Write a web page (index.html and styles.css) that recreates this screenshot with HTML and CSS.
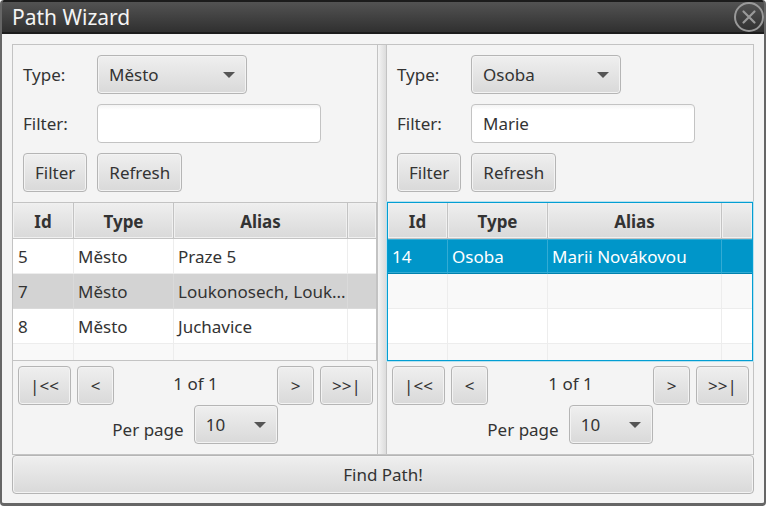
FILE: index.html
```
<!DOCTYPE html>
<html lang="en">
<head>
<meta charset="utf-8">
<title>Path Wizard</title>
<link rel="stylesheet" href="styles.css">
</head>
<body>
<div class="window">
  <header class="titlebar">
    <h1 class="title">Path Wizard</h1>
    <button class="close" type="button" aria-label="Close">
      <svg viewBox="0 0 30 30" width="30" height="30" fill="none" stroke="#999">
        <circle cx="15" cy="15" r="14" stroke-width="2"/>
        <path d="M9.500 9.500L20.500 20.500M20.500 9.500L9.500 20.500" stroke-width="2.200" stroke-linecap="round"/>
      </svg>
    </button>
  </header>
  <main class="content">
    <div class="split">
      <section class="pane pane-from">
        <form class="form">
          <label for="type-a">Type:</label>
          <span class="combo combo-type"><select id="type-a"><option>Město</option></select></span>
          <label for="filter-a">Filter:</label>
          <input class="field" id="filter-a" type="text">
          <div class="actions">
            <button class="btn" type="button">Filter</button>
            <button class="btn" type="button">Refresh</button>
          </div>
        </form>
        <div class="table-view">
          <table>
            <colgroup><col class="c-id"><col class="c-type"><col class="c-alias"><col></colgroup>
            <thead><tr><th>Id</th><th>Type</th><th>Alias</th><th></th></tr></thead>
            <tbody>
              <tr><td>5</td><td>Město</td><td>Praze 5</td><td></td></tr>
              <tr class="inactive"><td>7</td><td>Město</td><td>Loukonosech, Louk...</td><td></td></tr>
              <tr><td>8</td><td>Město</td><td>Juchavice</td><td></td></tr>
              <tr class="odd"><td></td><td></td><td></td><td></td></tr>
            </tbody>
          </table>
        </div>
        <nav class="pager">
          <button class="btn end" type="button">|&lt;&lt;</button>
          <button class="btn step" type="button">&lt;</button>
          <span class="count">1 of 1</span>
          <button class="btn step" type="button">&gt;</button>
          <button class="btn end" type="button">&gt;&gt;|</button>
        </nav>
        <div class="per-page">
          <label for="size-a">Per page</label>
          <span class="combo combo-size"><select id="size-a"><option>10</option></select></span>
        </div>
      </section>
      <div class="divider"></div>
      <section class="pane pane-to">
        <form class="form">
          <label for="type-b">Type:</label>
          <span class="combo combo-type"><select id="type-b"><option>Osoba</option></select></span>
          <label for="filter-b">Filter:</label>
          <input class="field" id="filter-b" type="text" value="Marie">
          <div class="actions">
            <button class="btn" type="button">Filter</button>
            <button class="btn" type="button">Refresh</button>
          </div>
        </form>
        <div class="table-view focused">
          <table>
            <colgroup><col class="c-id"><col class="c-type"><col class="c-alias"><col></colgroup>
            <thead><tr><th>Id</th><th>Type</th><th>Alias</th><th></th></tr></thead>
            <tbody>
              <tr class="selected"><td>14</td><td>Osoba</td><td>Marii Novákovou</td><td></td></tr>
              <tr class="odd"><td></td><td></td><td></td><td></td></tr>
              <tr><td></td><td></td><td></td><td></td></tr>
              <tr class="odd"><td></td><td></td><td></td><td></td></tr>
            </tbody>
          </table>
        </div>
        <nav class="pager">
          <button class="btn end" type="button">|&lt;&lt;</button>
          <button class="btn step" type="button">&lt;</button>
          <span class="count">1 of 1</span>
          <button class="btn step" type="button">&gt;</button>
          <button class="btn end" type="button">&gt;&gt;|</button>
        </nav>
        <div class="per-page">
          <label for="size-b">Per page</label>
          <span class="combo combo-size"><select id="size-b"><option>10</option></select></span>
        </div>
      </section>
    </div>
    <button class="btn find" type="button">Find Path!</button>
  </main>
</div>
</body>
</html>
```
FILE: styles.css
```
* {
  box-sizing: border-box;
}

body {
  margin: 0;
  background: #fff;
  color: #333;
  font: 17px/24px "Noto Sans", "Open Sans", sans-serif;
}

button,
input,
select {
  margin: 0;
  color: inherit;
  font: inherit;
}

.window {
  display: flex;
  flex-direction: column;
  height: 100vh;
  border: 2px solid #666;
  border-width: 0 2px 3px;
  border-radius: 4px;
  background: #f4f4f4;
  overflow: hidden;
}

.titlebar {
  display: flex;
  align-items: center;
  justify-content: space-between;
  height: 34px;
  margin: 0 -2px;
  padding: 0 1px 0 11px;
  border: 1px solid #1c1c1c;
  border-width: 2px 1px;
  border-radius: 4px 4px 0 0;
  background: linear-gradient(#535353, #303030);
}

.title {
  margin: 0;
  color: #f4f4f4;
  font-size: 21px;
  font-weight: 400;
  line-height: 30px;
}

.close {
  display: flex;
  padding: 0;
  border: 0;
  background: none;
}

.content {
  display: flex;
  flex: 1;
  flex-direction: column;
  min-height: 0;
  padding: 10px 10px 9px;
}

.split {
  display: flex;
  flex: 1;
  min-height: 0;
  border: 1px solid #c3c3c3;
}

.pane {
  display: flex;
  flex-direction: column;
  min-width: 0;
}

.pane-from {
  flex: 182;
}

.pane-to {
  flex: 183;
}

.divider {
  width: 10px;
  border: 1px solid #c3c3c3;
  border-width: 0 1px;
  background: linear-gradient(to right, #f4f4f4, #dcdcdc);
}

.form {
  display: grid;
  grid-template-columns: 64px 1fr;
  gap: 10px;
  align-items: center;
  justify-items: start;
  padding: 10px;
}

.actions {
  display: flex;
  grid-column: 1 / -1;
  gap: 10px;
}

.btn,
.combo select {
  height: 39px;
  border: 1px solid #b5b5b5;
  border-radius: 4px;
  background: linear-gradient(#efefef, #d9d9d9);
  box-shadow: inset 0 0 0 1px #f3f3f3;
}

.btn {
  padding: 0 11px;
}

.combo {
  position: relative;
  display: flex;
}

.combo select {
  width: 100%;
  padding: 0 30px 0 11px;
  appearance: none;
}

.combo::after {
  content: "";
  position: absolute;
  top: 17px;
  right: 12px;
  border: 6px solid transparent;
  border-top-color: #555;
  border-bottom: 0;
  pointer-events: none;
}

.combo-type {
  width: 150px;
}

.combo-size {
  width: 84px;
}

.field {
  width: 224px;
  height: 39px;
  padding: 0 11px;
  border: 1px solid #c3c3c3;
  border-radius: 4px;
  background: linear-gradient(#f4f4f4, #fff 5px);
}

.table-view {
  flex: 1;
  min-height: 0;
  border: 1px solid #c3c3c3;
  border-left-width: 0;
  background: #fff;
  overflow: hidden;
}

.focused {
  border-color: #039ed3;
  border-left-width: 1px;
  box-shadow: 0 0 0 1px #b9e1ee;
}

table {
  width: 100%;
  border-collapse: separate;
  border-spacing: 0;
  table-layout: fixed;
}

.c-id {
  width: 60px;
}

.c-type {
  width: 100px;
}

.c-alias {
  width: 174px;
}

.table-view:not(.focused) .c-id {
  width: 61px;
}

th {
  height: 36px;
  padding: 2px 0 0;
  border: 1px solid #c3c3c3;
  border-width: 0 1px 1px 0;
  background: linear-gradient(#efefef, #d9d9d9);
  box-shadow: inset 0 0 0 1px #f0f0f0;
}

td {
  height: 35px;
  padding: 2px 0 0 4px;
  border: 1px solid #ededed;
  border-width: 0 1px 1px 0;
  white-space: nowrap;
  overflow: hidden;
  text-overflow: ellipsis;
}

.table-view:not(.focused) td:first-child {
  padding-left: 5px;
}

th:last-child,
td:last-child {
  border-right: 0;
}

.odd td {
  background: #f9f9f9;
}

.inactive td {
  border-color: #dadada;
  background: #d3d3d3;
}

.selected td {
  border-right-color: #33abd4;
  border-bottom-color: #0082ae;
  background: #0096c9;
  box-shadow: inset 0 1px #33abd4, inset 0 -1px #33abd4;
  color: #fff;
}

.pager {
  display: flex;
  gap: 6px;
  padding: 5px 4px 0 5px;
}

.pager .btn {
  padding: 0;
}

.end {
  width: 53px;
}

.step {
  width: 37px;
}

.count {
  flex: 1;
  line-height: 36px;
  text-align: center;
}

.per-page {
  display: flex;
  gap: 10px;
  align-items: flex-end;
  justify-content: center;
  padding-bottom: 10px;
}

.per-page label {
  padding-bottom: 2px;
}
```
